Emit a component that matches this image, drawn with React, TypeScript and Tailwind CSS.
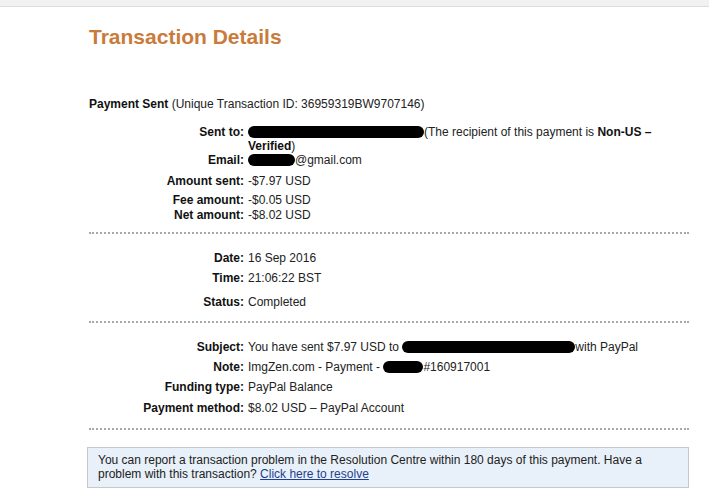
import React from "react";

function Pill({ w }: { w: string }) {
  return <span className={`inline-block h-[12px] ${w} rounded-full bg-black align-[-2px]`} />;
}

function Row({ label, children, mt }: { label: string; children: React.ReactNode; mt: string }) {
  return (
    <div className={`flex ${mt}`}>
      <div className="w-[155px] shrink-0 text-right font-bold text-[#111]">{label}</div>
      <div className="pl-[4px] w-[440px] text-[#222]">{children}</div>
    </div>
  );
}

export default function App() {
  return (
    <div
      className="w-[709px] h-[497px] bg-white overflow-hidden text-[12px] leading-[14px]"
      style={{ fontFamily: '"Liberation Sans", Arial, sans-serif' }}
    >
      <div className="h-[7px] bg-[#f1f1f1] border-b border-[#dcdcdc]" />
      <div className="pl-[89px] w-[689px]">
        <h1 className="mt-[18px] text-[21px] leading-[24px] font-bold text-[#c97b3b]">Transaction Details</h1>
        <div className="mt-[48px] text-[#222]">
          <span className="font-bold text-[#111]">Payment Sent</span> (Unique Transaction ID: 36959319BW9707146)
        </div>
        <Row label="Sent to:" mt="mt-[14px]">
          <Pill w="w-[176px]" />
          (The recipient of this payment is <b className="text-[#111] whitespace-nowrap">Non-US –</b>
          <br />
          <b className="text-[#111]">Verified</b>)
        </Row>
        <Row label="Email:" mt="mt-0">
          <Pill w="w-[47px]" />@gmail.com
        </Row>
        <Row label="Amount sent:" mt="mt-[7px]">-$7.97 USD</Row>
        <Row label="Fee amount:" mt="mt-[5px]">-$0.05 USD</Row>
        <Row label="Net amount:" mt="mt-[1px]">-$8.02 USD</Row>
        <div className="mt-[10px] border-t-2 border-dotted border-[#a8a8a8]" />
        <Row label="Date:" mt="mt-[17px]">16 Sep 2016</Row>
        <Row label="Time:" mt="mt-[6px]">21:06:22 BST</Row>
        <Row label="Status:" mt="mt-[10px]">Completed</Row>
        <div className="mt-[12px] border-t-2 border-dotted border-[#a8a8a8]" />
        <Row label="Subject:" mt="mt-[17px]">
          You have sent $7.97 USD to <Pill w="w-[173px]" />with PayPal
        </Row>
        <Row label="Note:" mt="mt-[6px]">
          ImgZen.com - Payment - <Pill w="w-[40px]" />#160917001
        </Row>
        <Row label="Funding type:" mt="mt-[6px]">PayPal Balance</Row>
        <Row label="Payment method:" mt="mt-[7px]">$8.02 USD – PayPal Account</Row>
        <div className="mt-[13px] border-t-2 border-dotted border-[#a8a8a8]" />
      </div>
      <div className="ml-[87px] w-[602px] mt-[17px] bg-[#e8f0f9] border border-[#c8c8c8] pl-[10px] pr-[8px] pt-[5px] pb-[6px] text-[#222]">
        You can report a transaction problem in the Resolution Centre within 180 days of this payment. Have a problem with this transaction?{" "}
        <a href="#" className="text-[#1f3f8f] underline">Click here to resolve</a>
      </div>
    </div>
  );
}
